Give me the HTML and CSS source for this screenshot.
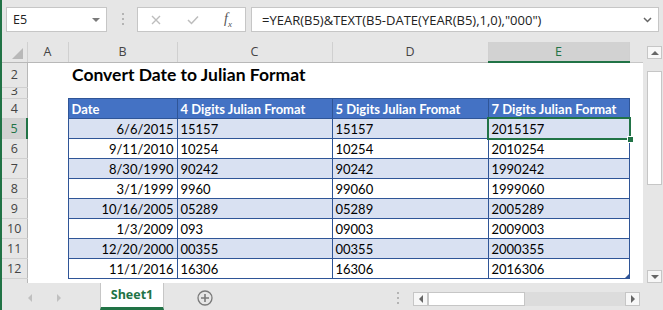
FILE: index.html
```html
<!DOCTYPE html>
<html lang="en">
<head>
    <meta charset="UTF-8">
    <meta name="viewport" content="width=device-width, initial-scale=1.0">
    <title>Convert Date to Julian Format</title>
    <link rel="stylesheet" href="styles.css">
</head>
<body>
<div class="excel">
    <!-- name box + formula bar -->
    <div class="toolbar">
        <div class="namebox">
            <span>E5</span>
            <span class="drop"></span>
        </div>
        <div class="grip"><i></i><i></i><i></i></div>
        <div class="fxbox">
            <svg class="ico-x" width="10" height="10" viewBox="0 0 10 10"><path d="M1 1 L9 9 M9 1 L1 9" stroke="#bdbdbd" stroke-width="1.4" fill="none"/></svg>
            <svg class="ico-ok" width="12" height="10" viewBox="0 0 12 10"><path d="M1 5 L4.5 8.5 L11 1.5" stroke="#bdbdbd" stroke-width="1.5" fill="none"/></svg>
            <span class="fx">f<sub>x</sub></span>
        </div>
        <div class="formula">
            <span>=YEAR(B5)&amp;TEXT(B5-DATE(YEAR(B5),1,0),"000")</span>
            <svg class="chev" width="9" height="6" viewBox="0 0 9 6"><path d="M1 1 L4.5 4.5 L8 1" stroke="#666" stroke-width="1.5" fill="none"/></svg>
        </div>
    </div>

    <div class="main">
        <div class="grid">
            <table class="sheet">
                <colgroup>
                    <col class="w-rh"><col class="w-a"><col class="w-b"><col class="w-c">
                    <col class="w-d"><col class="w-e"><col class="w-f">
                </colgroup>
                <thead>
                    <tr class="colhead">
                        <th class="corner"><span class="tri"></span></th>
                        <th>A</th>
                        <th>B</th>
                        <th>C</th>
                        <th>D</th>
                        <th class="sel">E</th>
                        <th class="none"></th>
                    </tr>
                </thead>
                <tbody>
                    <tr class="r-title">
                        <th class="rh">2</th>
                        <td></td>
                        <td class="title" colspan="4">Convert Date to Julian Format</td>
                        <td class="edge"></td>
                    </tr>
                    <tr class="r-thin">
                        <th class="rh"><div class="clip">3</div></th>
                        <td></td><td></td><td></td><td></td><td></td>
                        <td class="edge"></td>
                    </tr>
                    <tr class="r">
                        <th class="rh">4</th>
                        <td></td>
                        <td class="hd">Date</td>
                        <td class="hd">4 Digits Julian Fromat</td>
                        <td class="hd">5 Digits Julian Fromat</td>
                        <td class="hd">7 Digits Julian Format</td>
                        <td class="edge"></td>
                    </tr>
                </tbody>
                <tbody id="rows"></tbody>
                <tbody>
                    <tr class="r-end">
                        <th class="rh"></th>
                        <td></td><td></td><td></td><td></td><td></td>
                        <td class="edge"></td>
                    </tr>
                </tbody>
            </table>
        </div>
        <div class="vscroll">
            <div class="sbtn up"></div>
            <div class="vthumb"></div>
            <div class="vspace"></div>
            <div class="sbtn down"></div>
        </div>
    </div>

    <div class="tabs">
        <span class="nav left"></span>
        <span class="nav right"></span>
        <div class="tab">Sheet1</div>
        <svg class="add" width="16" height="16" viewBox="0 0 16 16">
            <circle cx="8" cy="8" r="7" stroke="#7a7a7a" stroke-width="1.3" fill="none"/>
            <path d="M8 4 V12 M4 8 H12" stroke="#7a7a7a" stroke-width="1.6"/>
        </svg>
        <div class="grip hgrip"><i></i><i></i><i></i></div>
        <div class="hscroll">
            <div class="sbtn hleft"></div>
            <div class="hthumb"></div>
            <div class="htrack"></div>
            <div class="sbtn hright"></div>
        </div>
    </div>
</div>

<script>
    // Julian date rows: date, 4 digits, 5 digits, 7 digits
    const data = [
        ["6/6/2015", "15157", "15157", "2015157"],
        ["9/11/2010", "10254", "10254", "2010254"],
        ["8/30/1990", "90242", "90242", "1990242"],
        ["3/1/1999", "9960", "99060", "1999060"],
        ["10/16/2005", "05289", "05289", "2005289"],
        ["1/3/2009", "093", "09003", "2009003"],
        ["12/20/2000", "00355", "00355", "2000355"],
        ["11/1/2016", "16306", "16306", "2016306"]
    ];

    const body = document.getElementById("rows");
    data.forEach((row, i) => {
        const tr = document.createElement("tr");
        tr.className = "r" + (i % 2 === 0 ? " band" : "");
        const selected = i === 0;
        const last = i === data.length - 1;
        tr.innerHTML = `
            <th class="rh${selected ? " sel" : ""}">${i + 5}</th>
            <td></td>
            <td class="dt num">${row[0]}</td>
            <td class="dt">${row[1]}</td>
            <td class="dt">${row[2]}</td>
            <td class="dt cell-e">${row[3]}${selected ? '<div class="selbox"><span class="handle"></span></div>' : ""}${last ? '<span class="resize"></span>' : ""}</td>
            <td class="edge"></td>
        `;
        body.appendChild(tr);
    });
</script>
</body>
</html>
```

FILE: styles.css
```css
body {
    margin: 0;
    padding: 0;
    background: #e6e6e6;
}

.excel {
    width: 663px;
    height: 310px;
    overflow: hidden;
    box-sizing: border-box;
    border-left: 2px solid #217346;
    background: #e6e6e6;
    font-family: "Open Sans", "Noto Sans", sans-serif;
    color: #444;
}

/* ---------- formula bar ---------- */
.toolbar {
    height: 42px;
    display: flex;
    align-items: flex-start;
    padding-top: 7px;
    box-sizing: border-box;
}

.namebox {
    margin-left: 4px;
    width: 101px;
    height: 25px;
    box-sizing: border-box;
    border: 1px solid #c6c6c6;
    background: white;
    display: flex;
    align-items: center;
    justify-content: space-between;
    padding: 0 6px 0 6px;
    font-size: 12.5px;
    color: #222;
}

.drop {
    width: 0;
    height: 0;
    border-left: 4px solid transparent;
    border-right: 4px solid transparent;
    border-top: 4px solid #7a7a7a;
}

.grip {
    margin-left: 15px;
    margin-top: 6px;
    display: flex;
    flex-direction: column;
    gap: 3px;
}

.grip i {
    display: block;
    width: 2px;
    height: 2px;
    background: #b4b4b4;
}

.fxbox {
    margin-left: 13px;
    width: 109px;
    height: 25px;
    box-sizing: border-box;
    border: 1px solid #c6c6c6;
    background: white;
    display: flex;
    align-items: center;
}

.ico-x {
    margin-left: 13px;
}

.ico-ok {
    margin-left: 26px;
}

.fx {
    margin-left: 25px;
    font-family: "Liberation Serif", serif;
    font-style: italic;
    font-size: 14px;
    color: #555;
}

.fx sub {
    font-size: 9px;
}

.formula {
    margin-left: 5px;
    width: 408px;
    height: 25px;
    box-sizing: border-box;
    border: 1px solid #c6c6c6;
    background: white;
    display: flex;
    align-items: center;
    justify-content: space-between;
    padding: 0 6px 0 10px;
    font-size: 13px;
    color: #222;
}

/* ---------- grid ---------- */
.main {
    display: flex;
    height: 241px;
}

.grid {
    width: 641px;
    height: 241px;
    overflow: hidden;
}

.sheet {
    table-layout: fixed;
    border-collapse: collapse;
    width: 641px;
    background: white;
}

.w-rh { width: 25px; }
.w-a { width: 41px; }
.w-b { width: 109px; }
.w-c { width: 155px; }
.w-d { width: 156px; }
.w-e { width: 141px; }
.w-f { width: 14px; }

.sheet th,
.sheet td {
    padding: 0;
    white-space: nowrap;
    overflow: visible;
}

.colhead th {
    height: 19px;
    background: #e6e6e6;
    border-right: 1px solid #d0d0d0;
    border-bottom: 1px solid #b8b8b8;
    font-weight: normal;
    font-size: 12.5px;
    color: #444;
    text-align: center;
}

.colhead th.sel {
    background: #d2d2d2;
    color: #217346;
    border-bottom: 2px solid #217346;
}

.colhead th.none {
    border-right: none;
    border-bottom: 1px solid #c6c6c6;
    background: #e6e6e6;
}

.corner {
    position: relative;
}

.tri {
    position: absolute;
    right: 4px;
    bottom: 3px;
    width: 0;
    height: 0;
    border-left: 11px solid transparent;
    border-bottom: 11px solid #b8b8b8;
}

.rh {
    background: #e6e6e6;
    border-right: 1px solid #b8b8b8;
    border-bottom: 1px solid #d0d0d0;
    font-weight: normal;
    font-size: 12.5px;
    color: #444;
    text-align: center;
}

.rh.sel {
    background: #d2d2d2;
    color: #217346;
    border-right: 2px solid #217346;
}

.r-title { height: 25px; }
.r-thin { height: 11px; }
.r { height: 20px; }
.r-end { height: 5px; }

.r-end .rh { border-bottom: none; }

.r-thin .clip {
    height: 10px;
    line-height: 6px;
    overflow: hidden;
}

.edge {
    border-right: 1px solid #c6c6c6;
}

.title {
    font-family: Lato, "Liberation Sans", sans-serif;
    font-weight: bold;
    font-size: 17.5px;
    color: #000;
    padding: 0 4px 2px 4px !important;
    vertical-align: bottom;
}

.hd,
.dt {
    border: 1px solid #2f5597;
    font-family: Lato, "Liberation Sans", sans-serif;
    font-size: 13px;
    padding: 1px 3px 0 3px !important;
    color: #000;
}

.hd {
    background: #4472c4;
    color: white;
    font-weight: bold;
}

.band .dt {
    background: #d9e1f2;
}

.num {
    text-align: right;
}

.cell-e {
    position: relative;
}

.selbox {
    position: absolute;
    left: -2px;
    top: -2px;
    right: -2px;
    bottom: -2px;
    border: 2px solid #217346;
}

.handle {
    position: absolute;
    right: -5px;
    bottom: -5px;
    width: 5px;
    height: 5px;
    background: #217346;
    border: 1px solid white;
}

.resize {
    position: absolute;
    right: 0;
    bottom: 0;
    width: 0;
    height: 0;
    border-left: 4px solid transparent;
    border-bottom: 4px solid #2f5597;
}

/* ---------- scrollbars ---------- */
.vscroll {
    width: 20px;
    display: flex;
    flex-direction: column;
    padding: 4px 1px 0 4px;
    box-sizing: border-box;
}

.sbtn {
    box-sizing: border-box;
    border: 1px solid #c6c6c6;
    background: #f7f7f7;
    position: relative;
}

.sbtn::after {
    content: "";
    position: absolute;
    left: 50%;
    top: 50%;
    width: 0;
    height: 0;
}

.up {
    height: 13px;
}

.up::after {
    margin: -2px 0 0 -4px;
    border-left: 4px solid transparent;
    border-right: 4px solid transparent;
    border-bottom: 4px solid #666;
}

.down {
    height: 13px;
}

.down::after {
    margin: -2px 0 0 -4px;
    border-left: 4px solid transparent;
    border-right: 4px solid transparent;
    border-top: 4px solid #666;
}

.vthumb {
    margin-top: 12px;
    height: 114px;
    box-sizing: border-box;
    border: 1px solid #c6c6c6;
    background: white;
}

.vspace {
    flex: 1;
}

/* ---------- sheet tabs ---------- */
.tabs {
    height: 27px;
    display: flex;
    align-items: flex-start;
    position: relative;
}

.nav {
    width: 0;
    height: 0;
    margin-top: 11px;
    border-top: 4px solid transparent;
    border-bottom: 4px solid transparent;
}

.nav.left {
    margin-left: 26px;
    border-right: 4px solid #c0c0c0;
}

.nav.right {
    margin-left: 25px;
    border-left: 4px solid #c0c0c0;
}

.tab {
    margin-left: 39px;
    width: 64px;
    height: 27px;
    box-sizing: border-box;
    background: white;
    border-left: 1px solid #c6c6c6;
    border-right: 1px solid #c6c6c6;
    border-bottom: 3px solid #217346;
    font-family: "Open Sans", sans-serif;
    font-weight: bold;
    font-size: 12.5px;
    color: #217346;
    text-align: center;
    line-height: 24px;
}

.add {
    margin-left: 33px;
    margin-top: 7px;
}

.hgrip {
    margin-left: 184px;
    margin-top: 9px;
}

.hscroll {
    margin-left: 14px;
    margin-top: 9px;
    width: 227px;
    height: 14px;
    display: flex;
}

.hleft,
.hright {
    width: 15px;
    height: 14px;
}

.hleft::after {
    margin: -4px 0 0 -2px;
    border-top: 4px solid transparent;
    border-bottom: 4px solid transparent;
    border-right: 4px solid #666;
}

.hright::after {
    margin: -4px 0 0 -2px;
    border-top: 4px solid transparent;
    border-bottom: 4px solid transparent;
    border-left: 4px solid #666;
}

.hthumb {
    width: 97px;
    height: 14px;
    box-sizing: border-box;
    border: 1px solid #c6c6c6;
    background: white;
}

.htrack {
    flex: 1;
    background: #dcdcdc;
}
```
